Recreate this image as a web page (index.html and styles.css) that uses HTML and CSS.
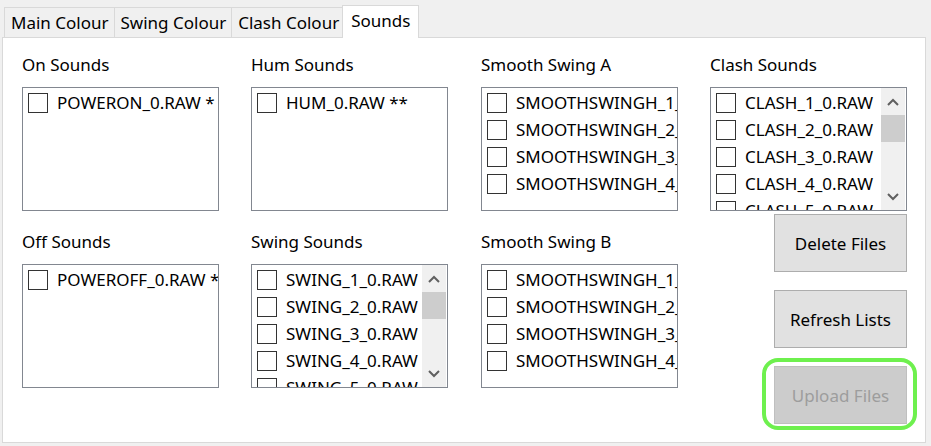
FILE: index.html
```html
<!DOCTYPE html>
<html>
<head>
<meta charset="utf-8">
<link rel="stylesheet" href="styles.css">
</head>
<body>
<div class="tabstrip">
  <div class="tab">Main Colour</div>
  <div class="tab">Swing Colour</div>
  <div class="tab">Clash Colour</div>
  <div class="tab selected">Sounds</div>
</div>
<div class="panel">
  <div class="col c1">
    <div class="group">
      <div class="label">On Sounds</div>
      <div class="listbox"><div class="items">
        <div class="item"><span class="cb"></span><span class="txt">POWERON_0.RAW *</span></div>
      </div></div>
    </div>
    <div class="group">
      <div class="label">Off Sounds</div>
      <div class="listbox"><div class="items">
        <div class="item"><span class="cb"></span><span class="txt">POWEROFF_0.RAW *</span></div>
      </div></div>
    </div>
  </div>
  <div class="col c2">
    <div class="group">
      <div class="label">Hum Sounds</div>
      <div class="listbox"><div class="items">
        <div class="item"><span class="cb"></span><span class="txt">HUM_0.RAW **</span></div>
      </div></div>
    </div>
    <div class="group">
      <div class="label">Swing Sounds</div>
      <div class="listbox"><div class="items">
        <div class="item"><span class="cb"></span><span class="txt">SWING_1_0.RAW</span></div>
        <div class="item"><span class="cb"></span><span class="txt">SWING_2_0.RAW</span></div>
        <div class="item"><span class="cb"></span><span class="txt">SWING_3_0.RAW</span></div>
        <div class="item"><span class="cb"></span><span class="txt">SWING_4_0.RAW</span></div>
        <div class="item"><span class="cb"></span><span class="txt">SWING_5_0.RAW</span></div>
      </div>
      <div class="scrollbar">
        <div class="sbtn"><svg width="12" height="8" viewBox="0 0 12 8"><polyline points="1,7 6,2 11,7" fill="none" stroke="#606060" stroke-width="2"/></svg></div>
        <div class="thumb"></div>
        <div class="track"></div>
        <div class="sbtn"><svg width="12" height="8" viewBox="0 0 12 8"><polyline points="1,1 6,6 11,1" fill="none" stroke="#606060" stroke-width="2"/></svg></div>
      </div></div>
    </div>
  </div>
  <div class="col c3">
    <div class="group">
      <div class="label">Smooth Swing A</div>
      <div class="listbox"><div class="items">
        <div class="item"><span class="cb"></span><span class="txt">SMOOTHSWINGH_1_0.RAW</span></div>
        <div class="item"><span class="cb"></span><span class="txt">SMOOTHSWINGH_2_0.RAW</span></div>
        <div class="item"><span class="cb"></span><span class="txt">SMOOTHSWINGH_3_0.RAW</span></div>
        <div class="item"><span class="cb"></span><span class="txt">SMOOTHSWINGH_4_0.RAW</span></div>
      </div></div>
    </div>
    <div class="group">
      <div class="label">Smooth Swing B</div>
      <div class="listbox"><div class="items">
        <div class="item"><span class="cb"></span><span class="txt">SMOOTHSWINGH_1_0.RAW</span></div>
        <div class="item"><span class="cb"></span><span class="txt">SMOOTHSWINGH_2_0.RAW</span></div>
        <div class="item"><span class="cb"></span><span class="txt">SMOOTHSWINGH_3_0.RAW</span></div>
        <div class="item"><span class="cb"></span><span class="txt">SMOOTHSWINGH_4_0.RAW</span></div>
      </div></div>
    </div>
  </div>
  <div class="col c4">
    <div class="group">
      <div class="label">Clash Sounds</div>
      <div class="listbox"><div class="items">
        <div class="item"><span class="cb"></span><span class="txt">CLASH_1_0.RAW</span></div>
        <div class="item"><span class="cb"></span><span class="txt">CLASH_2_0.RAW</span></div>
        <div class="item"><span class="cb"></span><span class="txt">CLASH_3_0.RAW</span></div>
        <div class="item"><span class="cb"></span><span class="txt">CLASH_4_0.RAW</span></div>
        <div class="item"><span class="cb"></span><span class="txt">CLASH_5_0.RAW</span></div>
      </div>
      <div class="scrollbar">
        <div class="sbtn"><svg width="12" height="8" viewBox="0 0 12 8"><polyline points="1,7 6,2 11,7" fill="none" stroke="#606060" stroke-width="2"/></svg></div>
        <div class="thumb"></div>
        <div class="track"></div>
        <div class="sbtn"><svg width="12" height="8" viewBox="0 0 12 8"><polyline points="1,1 6,6 11,1" fill="none" stroke="#606060" stroke-width="2"/></svg></div>
      </div></div>
    </div>
    <div class="buttons">
      <div class="btn">Delete Files</div>
      <div class="btn">Refresh Lists</div>
      <div class="btn disabled highlighted">Upload Files</div>
    </div>
  </div>
</div>
</body>
</html>
```
FILE: styles.css
```css
html, body {
  margin: 0;
  padding: 0;
}
body {
  background: #f0f0f0;
  font-family: "Noto Sans", "Open Sans", sans-serif;
  font-size: 17px;
  color: #000;
  width: 931px;
  height: 446px;
  overflow: hidden;
}
.tabstrip {
  display: flex;
  align-items: flex-end;
  padding-left: 4px;
  padding-top: 5px;
  height: 32px;
  box-sizing: content-box;
}
.tab {
  height: 30px;
  box-sizing: border-box;
  border: 1px solid #d9d9d9;
  border-bottom: none;
  margin-right: -1px;
  padding: 0 5px 0 6px;
  line-height: 30px;
  background: #f0f0f0;
  white-space: nowrap;
}
.tab.selected {
  height: 33px;
  margin-left: -2px;
  margin-bottom: -1px;
  padding: 0 8px 0 8px;
  line-height: 30px;
  background: #fff;
  position: relative;
  z-index: 1;
}
.panel {
  margin-left: 2px;
  width: 924px;
  height: 406px;
  box-sizing: border-box;
  border: 1px solid #d9d9d9;
  background: #fff;
  display: flex;
  padding: 16px 0 0 19px;
}
.col {
  display: flex;
  flex-direction: column;
  gap: 20px;
}
.c1, .c3 { width: 229px; }
.c2 { width: 230px; }
.c4 { width: 197px; gap: 0; }
.group {
  display: flex;
  flex-direction: column;
}
.label {
  height: 22px;
  line-height: 22px;
  margin-bottom: 11px;
  white-space: nowrap;
}
.listbox {
  width: 197px;
  height: 124px;
  box-sizing: border-box;
  border: 1px solid #828790;
  background: #fff;
  display: flex;
  overflow: hidden;
}
.items {
  flex: 1;
  min-width: 0;
  overflow: hidden;
  padding: 1px 0 0 5px;
}
.item {
  height: 27px;
  display: flex;
  align-items: center;
  white-space: nowrap;
}
.cb {
  flex: none;
  width: 20px;
  height: 20px;
  box-sizing: border-box;
  border: 1px solid #333;
  background: #fff;
  margin-right: 9px;
}
.txt {
  line-height: 27px;
}
.scrollbar {
  flex: none;
  width: 24px;
  margin-right: 1px;
  background: #f0f0f0;
  display: flex;
  flex-direction: column;
}
.sbtn {
  height: 27px;
  display: flex;
  align-items: center;
  justify-content: center;
}
.thumb {
  height: 27px;
  background: #cdcdcd;
}
.track { flex: 1; }
.buttons {
  display: flex;
  flex-direction: column;
  align-items: flex-end;
  gap: 18px;
  margin-top: 3px;
}
.btn {
  width: 133px;
  height: 58px;
  box-sizing: border-box;
  border: 1px solid #adadad;
  background: #e1e1e1;
  display: flex;
  align-items: center;
  justify-content: center;
  white-space: nowrap;
}
.btn.disabled {
  background: #cccccc;
  border-color: #bfbfbf;
  color: #9d9d9d;
}
.highlighted {
  position: relative;
}
.highlighted::after {
  content: "";
  position: absolute;
  left: -13px;
  right: -11px;
  top: -9px;
  bottom: -7px;
  border: 4px solid #6ef04e;
  border-radius: 16px;
}
```
